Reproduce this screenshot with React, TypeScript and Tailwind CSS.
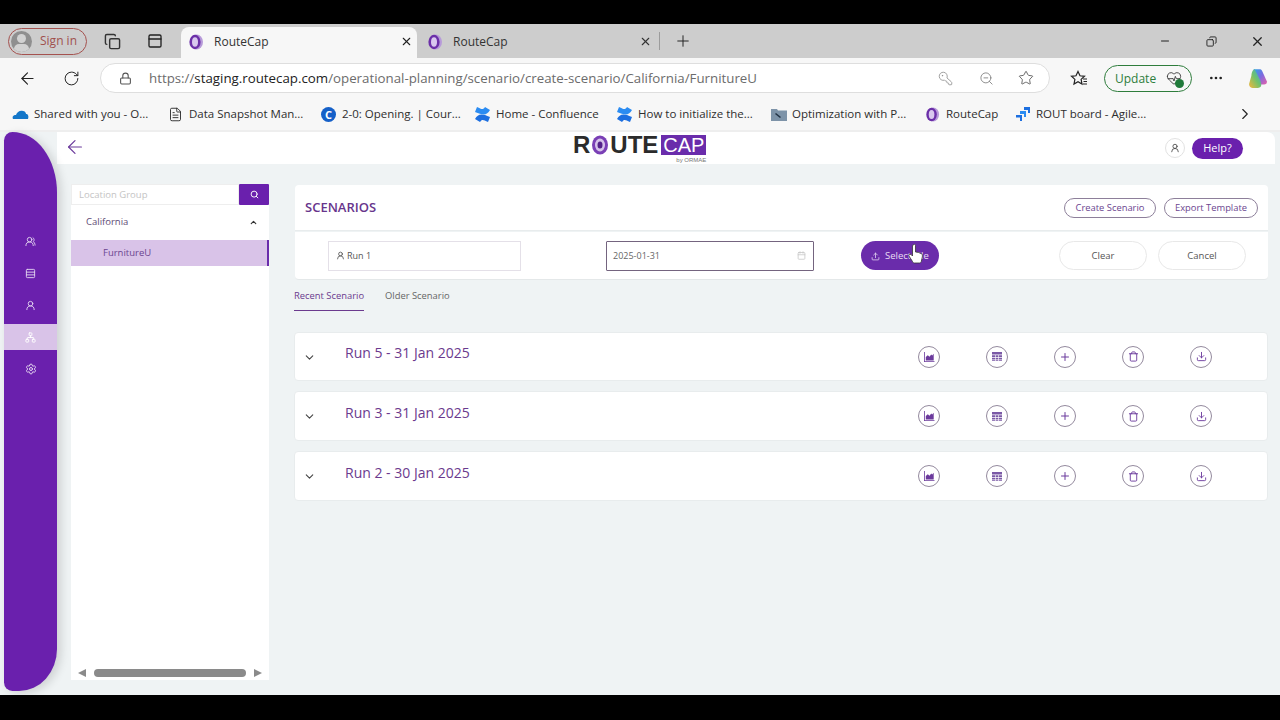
import React from "react";
import { ArrowLeft, RotateCw, Lock, KeyRound, ZoomOut, Star, MoreHorizontal, Minus, X, Plus, ChevronRight, ChevronUp, ChevronDown, Search, UserRound, UsersRound, Rows3, Network, Settings, Calendar, Upload, Download, Trash, Copy, PanelTop, HeartPulse, FileText } from "lucide-react";

const RouteIcon = ({ size = 16 }: { size?: number }) => (
  <svg width={size} height={size} viewBox="0 0 16 16">
    <ellipse cx="8.6" cy="8" rx="6.4" ry="7.4" fill="#b79ad9" />
    <ellipse cx="7" cy="8" rx="5.6" ry="7.2" fill="#6b2fa8" />
    <ellipse cx="7" cy="8" rx="3" ry="4.8" fill="#d9c8ee" />
  </svg>
);

const Confluence = () => (
  <svg width="17" height="17" viewBox="0 0 17 17">
    <path d="M1 13c3-5 6-6 15 -2l-2 5c-5-2.500-6-3-8 0z" fill="#1d6fe0" />
    <path d="M16 4c-3 5-6 6-15 2l2-5c5 2.500 6 3 8 0z" fill="#2b8cf2" />
  </svg>
);

function Bookmark({ w, icon, label }: { w: string; icon: React.ReactNode; label: string }) {
  return (
    <div className={`flex items-center gap-[5px] shrink-0 ${w}`}>
      <span className="w-[17px] flex justify-center shrink-0">{icon}</span>
      <span className="text-[11.5px] text-[#2e2e2e] whitespace-nowrap">{label}</span>
    </div>
  );
}

function ChartIcon() {
  return (
    <svg width="12" height="12" viewBox="0 0 12 12" fill="#6b3a9c">
      <path d="M1 1h.8v9.200H11.500V11H1z" />
      <path d="M2.800 9.400V6l2-1.800 1.700 1.500L8.200 3.600l1 1 1.500-1.800v6.600z" />
    </svg>
  );
}

function TableIcon() {
  return (
    <svg width="12" height="11" viewBox="0 0 12 11" fill="#7b5aa6">
      <path d="M1 1h10v2.500H1z" />
      <path d="M1 4.300h3v1.800H1zM4.600 4.300h2.800v1.800H4.600zM8 4.300h3v1.800H8zM1 6.800h3v1.800H1zM4.600 6.800h2.800v1.800H4.600zM8 6.800h3v1.800H8zM1 9.200h3V10H1zM4.600 9.200h2.800V10H4.600zM8 9.200h3V10H8z" />
    </svg>
  );
}

function RoundIcon({ children }: { children: React.ReactNode }) {
  return (
    <div className="w-[22px] h-[22px] rounded-full border border-[#948a9e] flex items-center justify-center text-[#6b3a9c] shrink-0">
      {children}
    </div>
  );
}

function RunCard({ title, h, mt }: { title: string; h: string; mt: string }) {
  return (
    <div className={`${h} ${mt} bg-white rounded-[4px] border border-[#e8eced] flex items-center`}>
      <ChevronDown size={13} className="ml-[8px] mt-[1px] text-[#444]" />
      <div className="ml-[29px] w-[573px] -mt-[8px] text-[14px] font-medium text-[#6b3a8e]">{title}</div>
      <div className="flex gap-[46px]">
        <RoundIcon><ChartIcon /></RoundIcon>
        <RoundIcon><TableIcon /></RoundIcon>
        <RoundIcon><Plus size={12} strokeWidth={2} /></RoundIcon>
        <RoundIcon><Trash size={11} /></RoundIcon>
        <RoundIcon><Download size={11} /></RoundIcon>
      </div>
    </div>
  );
}

export default function App() {
  return (
    <div className="w-[1280px] h-[720px] bg-black flex flex-col overflow-hidden font-['Open_Sans',sans-serif]">
      <div className="h-6 shrink-0" />

      {/* tab strip */}
      <div className="h-[34px] shrink-0 bg-[#cdcdcd] flex items-end">
        <div className="self-center ml-2 w-[79px] h-[27px] rounded-full border border-[#a5524f] flex items-center gap-[8px] pl-[2px]">
          <div className="w-[21px] h-[21px] rounded-full bg-[#8f8f8f] relative overflow-hidden">
            <div className="absolute left-[6px] top-[3px] w-[9px] h-[9px] rounded-full bg-[#d2d2d2]" />
            <div className="absolute left-[3px] top-[13px] w-[15px] h-[10px] rounded-full bg-[#d2d2d2]" />
          </div>
          <span className="text-[12px] text-[#a0504d]">Sign in</span>
        </div>
        <Copy size={17} className="self-center ml-[17px] text-[#333]" />
        <PanelTop size={16} className="self-center ml-[26px] text-[#222]" />
        <div className="ml-[18px] w-[236px] h-[31px] pb-[2px] bg-[#f7f7f7] rounded-t-[8px] flex items-center pl-[7px] pr-[4px]">
          <RouteIcon />
          <span className="ml-[10px] text-[12px] text-[#333] flex-1">RouteCap</span>
          <X size={13} className="text-[#222]" />
        </div>
        <div className="w-[240px] h-[31px] pb-[2px] flex items-center pl-[10px] pr-[5px]">
          <RouteIcon />
          <span className="ml-[10px] text-[12px] text-[#333] flex-1">RouteCap</span>
          <X size={13} className="text-[#333]" />
        </div>
        <div className="self-center w-px h-[18px] bg-[#9c9c9c] ml-[2px]" />
        <Plus size={18} strokeWidth={1.300} className="self-center ml-[14px] text-[#222]" />
        <div className="flex-1" />
        <Minus size={12} className="self-center mr-[35px] text-[#222]" />
        <Copy size={11} className="self-center mr-[33px] text-[#222] -scale-x-100" />
        <X size={15} className="self-center mr-[15px] text-[#222]" />
      </div>

      {/* address bar */}
      <div className="h-[40px] shrink-0 bg-[#f7f7f7] flex items-center">
        <ArrowLeft size={19} strokeWidth={1.400} className="ml-[18px] text-[#222]" />
        <RotateCw size={17} strokeWidth={1.400} className="ml-[26px] text-[#222]" />
        <div className="ml-[20px] w-[950px] h-[30px] bg-white rounded-full border border-[#dedede] flex items-center pl-[18px]">
          <Lock size={13} className="text-[#555]" />
          <div className="ml-[17px] pt-[1px] w-[789px] text-[13.300px] text-[#6c6c6c] whitespace-nowrap">
            https://<span className="text-[#222]">staging.routecap.com</span>/operational-planning/scenario/create-scenario/California/FurnitureU
          </div>
          <KeyRound size={15} strokeWidth={1.300} className="text-[#8c8c8c] -scale-x-100" />
          <ZoomOut size={15} strokeWidth={1.300} className="ml-[26px] text-[#777]" />
          <Star size={16} strokeWidth={1.300} className="ml-[24px] text-[#555]" />
        </div>
        <svg width="18" height="17" viewBox="0 0 18 17" fill="none" stroke="#222" strokeWidth="1.200" className="ml-[20px]">
          <path d="M8 1.500l2 4.300 4.500.5-3.400 3.100.9 4.600L8 11.700l-4 2.300.9-4.600L1.500 6.300 6 5.800z" />
          <path d="M13 9h4M13.500 11.500h3.500M13 14h4" />
        </svg>
        <div className="ml-[16px] w-[88px] h-[27px] rounded-full border border-[#2e7d3c] flex items-center pl-[10px] gap-[10px]">
          <span className="text-[12px] pt-[1px] text-[#2e7d3c]">Update</span>
          <span className="relative">
            <HeartPulse size={16} strokeWidth={1.300} className="text-[#333]" />
            <span className="absolute -right-[2px] -bottom-[2px] w-[9px] h-[9px] rounded-full bg-[#1f7a3a]" />
          </span>
        </div>
        <MoreHorizontal size={16} className="ml-[16px] text-[#222]" />
        <svg width="22" height="22" viewBox="0 0 20 20" className="ml-[23px]">
          <defs>
            <linearGradient id="cp1" x1="0" y1="0" x2="1" y2="1">
              <stop offset="0" stopColor="#2aa5e8" />
              <stop offset=".5" stopColor="#7b6be0" />
              <stop offset="1" stopColor="#e860a8" />
            </linearGradient>
            <linearGradient id="cp2" x1="0" y1="1" x2="1" y2="0">
              <stop offset="0" stopColor="#f4b63c" />
              <stop offset=".5" stopColor="#72c26a" />
              <stop offset="1" stopColor="#35a6e0" />
            </linearGradient>
          </defs>
          <path d="M6 2h6c1 0 1.500 1 2 2l4 9c.5 2-1 3-2.500 3H12L6 2z" fill="url(#cp1)" />
          <path d="M4 8c0-2 1-6 3-6l5 10c.5 1 1 4 1 4 0 2-1 3-3 3H5c-2 0-3.500-2-3-4z" fill="url(#cp2)" />
        </svg>
      </div>

      {/* bookmarks */}
      <div className="h-[32px] shrink-0 bg-[#f7f7f7] flex items-center pl-3">
        <Bookmark w="w-[155px]" label="Shared with you - O..." icon={
          <svg width="17" height="11" viewBox="0 0 17 11"><path d="M1 10c-1-2 0-4 3-4 1-3 4-5 7-4 2 0 3 2 3 3 2 0 3 2 2 5z" fill="#1477c9" /></svg>
        } />
        <Bookmark w="w-[153px]" label="Data Snapshot Man..." icon={<FileText size={15} strokeWidth={1.400} className="text-[#222]" />} />
        <Bookmark w="w-[154px]" label="2-0: Opening. | Cour..." icon={
          <div className="w-[15px] h-[15px] rounded-full bg-[#1560c8] text-white text-[11px] font-bold leading-[15px] text-center">C</div>
        } />
        <Bookmark w="w-[142px]" label="Home - Confluence" icon={<Confluence />} />
        <Bookmark w="w-[154px]" label="How to initialize the..." icon={<Confluence />} />
        <Bookmark w="w-[154px]" label="Optimization with P..." icon={
          <svg width="16" height="14" viewBox="0 0 16 14"><path d="M0 2h6l1 1.500h9V14H0z" fill="#7d93a8" /><path d="M5 6l5 4-1 1-5-4z" fill="#234" /></svg>
        } />
        <Bookmark w="w-[90px]" label="RouteCap" icon={<RouteIcon size={15} />} />
        <Bookmark w="w-[222px]" label="ROUT board - Agile..." icon={
          <svg width="16" height="16" viewBox="0 0 16 16"><path d="M9 1h6v6h-2V4H9z" fill="#1d6fe0" /><path d="M5 5h6v6H9V8H5z" fill="#2b8cf2" /><path d="M1 9h6v6H5v-3.500H1z" fill="#1d6fe0" /></svg>
        } />
        <ChevronRight size={18} strokeWidth={1.500} className="text-[#222]" />
      </div>

      <div className="h-[2px] shrink-0 bg-[#eeeeee]" />

      {/* page */}
      <div className="h-[563px] shrink-0 flex bg-[#eff3f4]">
        <div className="ml-1 mb-1 w-[53px] bg-[#6a20ad] rounded-tr-[53px_72px] rounded-br-[45px_50px] rounded-tl-[10px] rounded-bl-[10px] shadow-[4px_2px_10px_rgba(0,0,0,0.14)] flex flex-col items-stretch pt-[93px] text-white z-10">
          <div className="h-8 flex items-center justify-center"><UsersRound size={11} className="text-[#e3d4f0]" /></div>
          <div className="h-8 flex items-center justify-center"><Rows3 size={11} className="text-[#e3d4f0]" /></div>
          <div className="h-8 flex items-center justify-center"><UserRound size={11} className="text-[#e3d4f0]" /></div>
          <div className="h-[26px] my-[3px] bg-[#d9c3e8] flex items-center justify-center"><Network size={11} className="text-white" /></div>
          <div className="h-8 flex items-center justify-center"><Settings size={12} className="text-[#e3d4f0]" /></div>
        </div>

        <div className="flex-1 flex flex-col min-w-0">
          {/* app header */}
          <div className="h-[32px] mr-[5px] bg-white rounded-tr-[8px] flex items-center">
            <ArrowLeft size={22} strokeWidth={1.300} className="ml-[7px] -mt-[2px] text-[#6b3a9c]" />
            <div className="ml-[487px] flex flex-col items-end">
              <div className="flex items-center h-[20px] mt-[2px]">
                <span className="text-[24px] leading-[20px] font-bold text-[#2b2b2b] font-['Liberation_Sans',sans-serif]">R</span>
                <svg width="18" height="20" viewBox="0 0 17 20" className="mx-[1px]">
                  <ellipse cx="8.500" cy="10" rx="8" ry="9.500" fill="#7a3fb5" />
                  <ellipse cx="8.500" cy="10" rx="5" ry="6.500" fill="#d6c2ea" />
                  <ellipse cx="8.500" cy="10" rx="2.500" ry="3.500" fill="#54218a" />
                </svg>
                <span className="text-[24px] leading-[20px] font-bold text-[#2b2b2b] font-['Liberation_Sans',sans-serif]">UTE</span>
                <span className="ml-[3px] w-[45px] h-[20px] bg-[#6a2cab] text-white text-[20px] leading-[20px] text-center font-['Liberation_Sans',sans-serif]">CAP</span>
              </div>
              <span className="text-[6px] leading-[8px] mt-[1px] text-[#777] font-['Liberation_Sans',sans-serif]">by ORMAE</span>
            </div>
            <div className="flex-1" />
            <div className="w-[20px] h-[20px] rounded-full border border-[#e2e2e2] flex items-center justify-center text-[#444]">
              <UserRound size={10} />
            </div>
            <div className="ml-[7px] mr-[32px] w-[51px] h-[21px] rounded-full bg-[#6a20ad] text-white text-[11px] flex items-center justify-center">Help?</div>
          </div>

          <div className="flex flex-1 min-h-0">
            {/* location panel */}
            <div className="ml-[14px] mt-[20px] mb-[15px] w-[198px] bg-white flex flex-col">
              <div className="h-[21px] flex">
                <div className="flex-1 border border-[#eeeeee] text-[9.500px] leading-[19px] pl-[7px] text-[#c4c4c4]">Location Group</div>
                <div className="w-[30px] bg-[#6a20ad] flex items-center justify-center rounded-[1px]"><Search size={9} strokeWidth={2.500} className="text-white" /></div>
              </div>
              <div className="h-[35px] flex items-center pl-[15px] pr-[11px] justify-between text-[9.500px] text-[#5e4a75]">
                California
                <ChevronUp size={9} strokeWidth={3} className="text-[#333]" />
              </div>
              <div className="h-[26px] bg-[#d9c3e8] border-r-2 border-[#6a2cab] flex items-center pl-[32px] text-[9.500px] text-[#6b4590]">FurnitureU</div>
              <div className="flex-1" />
              <div className="h-[15px] flex items-center pl-[7px] pr-[7px]">
                <span className="w-0 h-0 border-y-[4px] border-y-transparent border-r-[8px] border-r-[#8a8a8a]" />
                <div className="ml-[8px] w-[152px] h-[8px] rounded-full bg-[#8a8a8a]" />
                <div className="flex-1" />
                <span className="w-0 h-0 border-y-[4px] border-y-transparent border-l-[8px] border-l-[#8a8a8a]" />
              </div>
            </div>

            {/* main */}
            <div className="ml-[25px] w-[974px] pt-[21px] flex flex-col">
              <div className="h-[46px] ml-[1px] pt-[1px] bg-white rounded-t-[4px] border-b border-[#e8eced] flex items-center pl-[10px] pr-[10px]">
                <span className="text-[13px] font-semibold text-[#68358c]">SCENARIOS</span>
                <div className="flex-1" />
                <div className="h-[20px] w-[92px] rounded-full border border-[#8d7f9a] text-[9.400px] text-[#6b4590] flex items-center justify-center">Create Scenario</div>
                <div className="ml-[8px] h-[20px] w-[94px] rounded-full border border-[#8d7f9a] text-[9.400px] text-[#6b4590] flex items-center justify-center">Export Template</div>
              </div>
              <div className="h-[48px] mt-[1px] ml-[1px] bg-white rounded-b-[4px] border-b border-[#e4e8e9] flex items-center pl-[33px]">
                <div className="w-[193px] h-[30px] border border-[#e4e0e8] flex items-center pl-[7px] gap-[2px] text-[9px] text-[#555]">
                  <UserRound size={9} className="text-[#444]" />
                  Run 1
                </div>
                <div className="ml-[85px] w-[208px] h-[30px] border border-[#74647f] rounded-[1px] flex items-center pl-[6px] pr-[7px] justify-between text-[9px] text-[#666]">
                  2025-01-31
                  <Calendar size={9} className="text-[#c4c4c4]" />
                </div>
                <div className="relative ml-[47px] w-[78px] h-[29px] pt-[1px] rounded-full bg-[#6a2cab] flex items-center pl-[10px] gap-[5px] text-[9.500px] text-[#e9ddf4]">
                  <Upload size={9} />
                  Select File
                  <svg width="16" height="20" viewBox="0 0 16 20" className="absolute left-[47px] top-[3px]">
                    <path d="M5 1c1-1 2.500-1 2.500.5V8l3 .5 3 1.200c1 .6 1 2 .8 3.300l-1 4.500c-.2 1-1 1.500-2 1.500H6.500c-1 0-1.500-.5-2-1.500L1 12c-.5-1 .5-2.500 2-1.500l1.500 1.500V2z" fill="#fff" stroke="#333" strokeWidth=".8" />
                  </svg>
                </div>
                <div className="ml-[120px] w-[88px] h-[29px] pt-[1px] rounded-full border border-[#e8e8e8] text-[9.500px] text-[#555] flex items-center justify-center">Clear</div>
                <div className="ml-[11px] w-[88px] h-[29px] pt-[1px] rounded-full border border-[#e8e8e8] text-[9.500px] text-[#555] flex items-center justify-center">Cancel</div>
              </div>

              <div className="mt-[9px] flex text-[9.400px]">
                <div className="h-[22px] border-b border-[#6b3a8e] font-medium text-[#6b3a8e]">Recent Scenario</div>
                <div className="ml-[21px] text-[#666]">Older Scenario</div>
              </div>

              <RunCard title="Run 5 - 31 Jan 2025" h="h-[49px]" mt="mt-[21px]" />
              <RunCard title="Run 3 - 31 Jan 2025" h="h-[50px]" mt="mt-[10px]" />
              <RunCard title="Run 2 - 30 Jan 2025" h="h-[50px]" mt="mt-[10px]" />
            </div>
          </div>
        </div>
      </div>

      <div className="flex-1" />
    </div>
  );
}
